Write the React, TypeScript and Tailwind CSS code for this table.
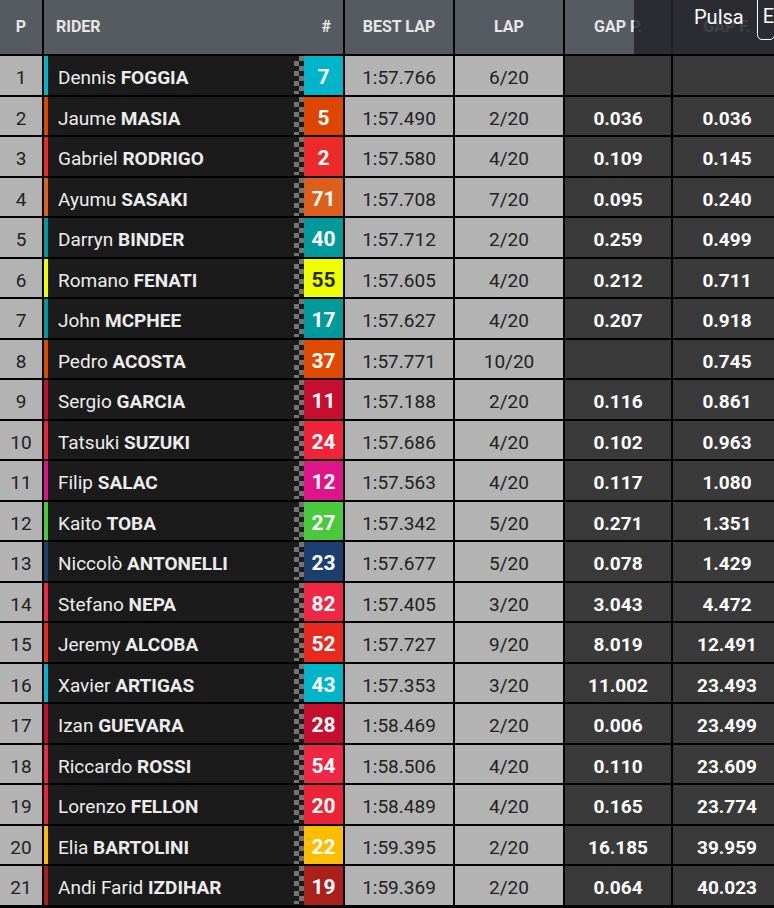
const rows: [number, string, string, string, string, string, string, string, string][] = [
  [1, "Dennis", "FOGGIA", "7", "#00b5c9", "1:57.766", "6/20", "", ""],
  [2, "Jaume", "MASIA", "5", "#de4500", "1:57.490", "2/20", "0.036", "0.036"],
  [3, "Gabriel", "RODRIGO", "2", "#ec2a2a", "1:57.580", "4/20", "0.109", "0.145"],
  [4, "Ayumu", "SASAKI", "71", "#de5f1c", "1:57.708", "7/20", "0.095", "0.240"],
  [5, "Darryn", "BINDER", "40", "#009a9a", "1:57.712", "2/20", "0.259", "0.499"],
  [6, "Romano", "FENATI", "55", "#eeff00", "1:57.605", "4/20", "0.212", "0.711"],
  [7, "John", "MCPHEE", "17", "#009a9a", "1:57.627", "4/20", "0.207", "0.918"],
  [8, "Pedro", "ACOSTA", "37", "#de4a00", "1:57.771", "10/20", "", "0.745"],
  [9, "Sergio", "GARCIA", "11", "#c60f2e", "1:57.188", "2/20", "0.116", "0.861"],
  [10, "Tatsuki", "SUZUKI", "24", "#ef2438", "1:57.686", "4/20", "0.102", "0.963"],
  [11, "Filip", "SALAC", "12", "#df1488", "1:57.563", "4/20", "0.117", "1.080"],
  [12, "Kaito", "TOBA", "27", "#4ac93c", "1:57.342", "5/20", "0.271", "1.351"],
  [13, "Niccolò", "ANTONELLI", "23", "#1c3f6e", "1:57.677", "5/20", "0.078", "1.429"],
  [14, "Stefano", "NEPA", "82", "#f02645", "1:57.405", "3/20", "3.043", "4.472"],
  [15, "Jeremy", "ALCOBA", "52", "#e8291e", "1:57.727", "9/20", "8.019", "12.491"],
  [16, "Xavier", "ARTIGAS", "43", "#00b5c9", "1:57.353", "3/20", "11.002", "23.493"],
  [17, "Izan", "GUEVARA", "28", "#c60f2e", "1:58.469", "2/20", "0.006", "23.499"],
  [18, "Riccardo", "ROSSI", "54", "#f02645", "1:58.506", "4/20", "0.110", "23.609"],
  [19, "Lorenzo", "FELLON", "20", "#ec2236", "1:58.489", "4/20", "0.165", "23.774"],
  [20, "Elia", "BARTOLINI", "22", "#ffbd00", "1:59.395", "2/20", "16.185", "39.959"],
  [21, "Andi Farid", "IZDIHAR", "19", "#ac201b", "1:59.369", "2/20", "0.064", "40.023"],
];

function Checker() {
  return (
    <svg width="10" height="38" className="shrink-0">
      <defs>
        <pattern id="chk" width="10" height="10" patternUnits="userSpaceOnUse">
          <rect x="5" y="0" width="5" height="5" fill="#747474" />
          <rect x="0" y="5" width="5" height="5" fill="#747474" />
        </pattern>
      </defs>
      <rect width="10" height="38" fill="url(#chk)" />
    </svg>
  );
}

export default function App() {
  return (
    <div className="relative w-[774px] h-[908px] overflow-hidden bg-black font-['Roboto',sans-serif]">
      <div className="grid grid-cols-[42px_299px_108px_108px_106px_108px] gap-[2px] w-[781px]">
        {/* header */}
        <div className="h-[54px] bg-[#565b62] flex items-center justify-center text-[16px] font-bold text-[#e6e6e6]">
          P
        </div>
        <div className="h-[54px] bg-[#565b62] flex items-center justify-between pl-[12px] pr-[12px] text-[16px] font-bold text-[#e6e6e6]">
          <span>RIDER</span>
          <span>#</span>
        </div>
        <div className="h-[54px] bg-[#565b62] flex items-center justify-center text-[16px] font-bold text-[#e6e6e6]">
          BEST LAP
        </div>
        <div className="h-[54px] bg-[#565b62] flex items-center justify-center text-[16px] font-bold text-[#e6e6e6]">
          LAP
        </div>
        <div className="h-[54px] bg-[#565b62] flex items-center justify-center text-[16px] font-bold text-[#e6e6e6]">
          GAP P.
        </div>
        <div className="h-[54px] bg-[#565b62] flex items-center justify-center text-[16px] font-bold text-[#e6e6e6]">
          GAP F.
        </div>

        {rows.map(([pos, first, last, num, color, best, lap, gapP, gapF]) => (
          <div key={pos} className="contents">
            <div className="h-[38.5px] pt-[6px] bg-[#b3b3b3] flex items-center justify-center text-[19px] text-[#222]">
              {pos}
            </div>
            <div className="h-[38.5px] bg-[#1b1b1b] flex items-center">
              <div className="w-[4px] h-full" style={{ backgroundColor: color }} />
              <div className="flex-1 pl-[10px] pt-[6px] text-[19px] text-[#ececec] whitespace-nowrap">
                {first} <span className="font-bold">{last}</span>
              </div>
              <Checker />
              <div
                className={
                  "w-[39px] h-full pt-[5px] flex items-center justify-center text-[21px] font-bold " +
                  (num === "55" ? "text-[#2a2a10]" : "text-white")
                }
                style={{ backgroundColor: color }}
              >
                {num}
              </div>
            </div>
            <div className="h-[38.5px] pt-[6px] bg-[#b3b3b3] flex items-center justify-center text-[19px] text-[#222]">
              {best}
            </div>
            <div className="h-[38.5px] pt-[6px] bg-[#b3b3b3] flex items-center justify-center text-[19px] text-[#222]">
              {lap}
            </div>
            <div className="h-[38.5px] pt-[6px] bg-[#3a3a3a] flex items-center justify-center text-[19px] font-bold text-white">
              {gapP}
            </div>
            <div className="h-[38.5px] pt-[6px] bg-[#3a3a3a] flex items-center justify-center text-[19px] font-bold text-white">
              {gapF}
            </div>
          </div>
        ))}
      </div>

      {/* translucent overlay top-right */}
      <div className="absolute top-0 left-[634px] w-[140px] h-[54px] bg-[#23252a]/85 flex items-start">
        <span className="ml-[60px] mt-[2px] text-[20px] text-white">Pulsa</span>
        <div className="ml-[13px] -mt-[6px] h-[46px] w-[40px] border border-white rounded-[5px] pl-[5px] pt-[11px] text-[20px] text-white leading-none">
          E
        </div>
      </div>
    </div>
  );
}
